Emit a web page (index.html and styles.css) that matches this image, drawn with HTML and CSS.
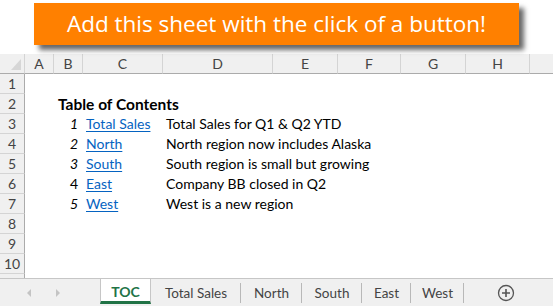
FILE: index.html
```html
<!DOCTYPE html>
<html lang="en">

<head>
  <link rel="stylesheet" href="styles.css">
</head>

<body>
  <div class="banner">Add this sheet with the click of a button!</div>

  <div class="sheet">
    <div class="corner"><span class="corner-tri"></span></div>
    <div class="col-head">A</div>
    <div class="col-head">B</div>
    <div class="col-head">C</div>
    <div class="col-head">D</div>
    <div class="col-head">E</div>
    <div class="col-head">F</div>
    <div class="col-head">G</div>
    <div class="col-head">H</div>
    <div class="col-head last"></div>

    <div class="row-head">1</div>
    <div class="cell full"></div>

    <div class="row-head">2</div>
    <div class="cell"></div>
    <div class="cell title">Table of Contents</div>

    <div class="row-head">3</div>
    <div class="cell"></div>
    <div class="cell num italic">1</div>
    <div class="cell"><a href="#">Total Sales</a></div>
    <div class="cell desc">Total Sales for Q1 &amp; Q2 YTD</div>

    <div class="row-head">4</div>
    <div class="cell"></div>
    <div class="cell num italic">2</div>
    <div class="cell"><a href="#">North</a></div>
    <div class="cell desc">North region now includes Alaska</div>

    <div class="row-head">5</div>
    <div class="cell"></div>
    <div class="cell num italic">3</div>
    <div class="cell"><a href="#">South</a></div>
    <div class="cell desc">South region is small but growing</div>

    <div class="row-head">6</div>
    <div class="cell"></div>
    <div class="cell num">4</div>
    <div class="cell"><a href="#">East</a></div>
    <div class="cell desc">Company BB closed in Q2</div>

    <div class="row-head">7</div>
    <div class="cell"></div>
    <div class="cell num italic">5</div>
    <div class="cell"><a href="#">West</a></div>
    <div class="cell desc">West is a new region</div>

    <div class="row-head">8</div>
    <div class="cell full"></div>
    <div class="row-head">9</div>
    <div class="cell full"></div>
    <div class="row-head">10</div>
    <div class="cell full"></div>

    <div class="row-head stub"></div>
    <div class="cell full"></div>
  </div>

  <div class="tabbar">
    <div class="nav">
      <span class="arrow left"></span>
      <span class="arrow right"></span>
    </div>
    <div class="tab active">TOC</div>
    <div class="tab w90">Total Sales</div>
    <div class="tab w61">North</div>
    <div class="tab w60">South</div>
    <div class="tab w49">East</div>
    <div class="tab w53">West</div>
    <div class="add">
      <svg xmlns="http://www.w3.org/2000/svg" viewBox="0 0 18 18" width="18" height="18">
        <circle cx="9" cy="9" r="7.5" fill="none" stroke="#555" stroke-width="1.3" />
        <path d="M9 5v8M5 9h8" stroke="#555" stroke-width="1.6" />
      </svg>
    </div>
  </div>
</body>

</html>
```

FILE: styles.css
```css
:root {
  --head-bg: #f0f0f0;
  --head-line: #d4d4d4;
  --head-dark: #ababab;
  --head-text: #444444;
  --link: #0563c1;
  --green: #217346;
  --orange: #ff8000;
}

* {
  box-sizing: border-box;
  margin: 0;
  padding: 0;
}

body {
  width: 553px;
  height: 306px;
  overflow: hidden;
  background: #ffffff;
  font-family: 'Lato', 'Liberation Sans', sans-serif;
  font-size: 14px;
  color: #000000;
}

.banner {
  position: relative;
  z-index: 2;
  width: 485px;
  height: 42px;
  margin: 3px 0 0 34px;
  background: var(--orange);
  color: #ffffff;
  font-family: 'Open Sans', sans-serif;
  font-size: 22.5px;
  line-height: 42px;
  text-align: center;
  box-shadow: 5px 5px 5px rgba(0, 0, 0, 0.6);
}

.sheet {
  margin-top: 9px;
  display: grid;
  grid-template-columns: 25px 29px 29px 80px 110px 65px 63px 65px 64px 1fr;
  grid-template-rows: repeat(11, 20px) 4px;
}

.corner {
  background: var(--head-bg);
  border-right: 1px solid var(--head-line);
  border-bottom: 1px solid var(--head-dark);
  display: flex;
  align-items: flex-end;
  justify-content: flex-end;
  padding: 0 3px 3px 0;
}

.corner-tri {
  width: 0;
  height: 0;
  border-left: 10px solid transparent;
  border-bottom: 11px solid #d6d6d6;
}

.col-head {
  background: var(--head-bg);
  border-right: 1px solid var(--head-line);
  border-bottom: 1px solid var(--head-dark);
  color: var(--head-text);
  text-align: center;
  line-height: 19px;
}

.col-head.last {
  border-right: none;
}

.row-head {
  grid-column: 1;
  background: var(--head-bg);
  border-right: 1px solid var(--head-dark);
  border-bottom: 1px solid var(--head-line);
  color: var(--head-text);
  text-align: center;
  line-height: 19px;
}

.row-head.stub {
  border-bottom: none;
}

.cell {
  line-height: 20px;
  white-space: nowrap;
  padding: 0 3px;
}

.cell.full {
  grid-column: 2 / -1;
}

.title {
  grid-column: 3 / -1;
  font-size: 15.5px;
  font-weight: 700;
  padding-left: 4px;
}

.num {
  text-align: right;
  padding-right: 5px;
}

.italic {
  font-style: italic;
}

.cell a {
  color: var(--link);
  text-decoration: underline;
  text-underline-offset: 2px;
}

.desc {
  grid-column: 5 / -1;
}

.tabbar {
  height: 28px;
  background: var(--head-bg);
  border-top: 1px solid #c6c6c6;
  display: flex;
  align-items: flex-start;
  color: var(--head-text);
  font-size: 13.5px;
}

.nav {
  width: 100px;
  height: 27px;
  display: flex;
  align-items: center;
  padding-left: 27px;
  gap: 25px;
}

.arrow {
  width: 0;
  height: 0;
  border-top: 4px solid transparent;
  border-bottom: 4px solid transparent;
}

.arrow.left {
  border-right: 4px solid #c4c4c4;
}

.arrow.right {
  border-left: 4px solid #c4c4c4;
}

.tab {
  position: relative;
  height: 24px;
  margin-top: 3px;
  line-height: 22px;
  text-align: center;
  white-space: nowrap;
}

.w90 { width: 90px; }
.w61 { width: 61px; }
.w60 { width: 60px; }
.w49 { width: 49px; }
.w53 { width: 53px; }

.tab::after {
  content: '';
  position: absolute;
  right: 0;
  top: 1px;
  height: 20px;
  border-right: 1px solid #b8b8b8;
}

.tab.active {
  height: 25px;
  margin-top: 0;
  padding-top: 2px;
  background: #ffffff;
  border-left: 1px solid #c6c6c6;
  border-right: 1px solid #c6c6c6;
  border-bottom: 3px solid var(--green);
  color: var(--green);
  font-size: 14px;
  font-weight: 700;
  width: 51px;
}

.tab.active::after {
  display: none;
}

.add {
  margin-left: 33px;
  margin-top: 5px;
  display: flex;
}
```
